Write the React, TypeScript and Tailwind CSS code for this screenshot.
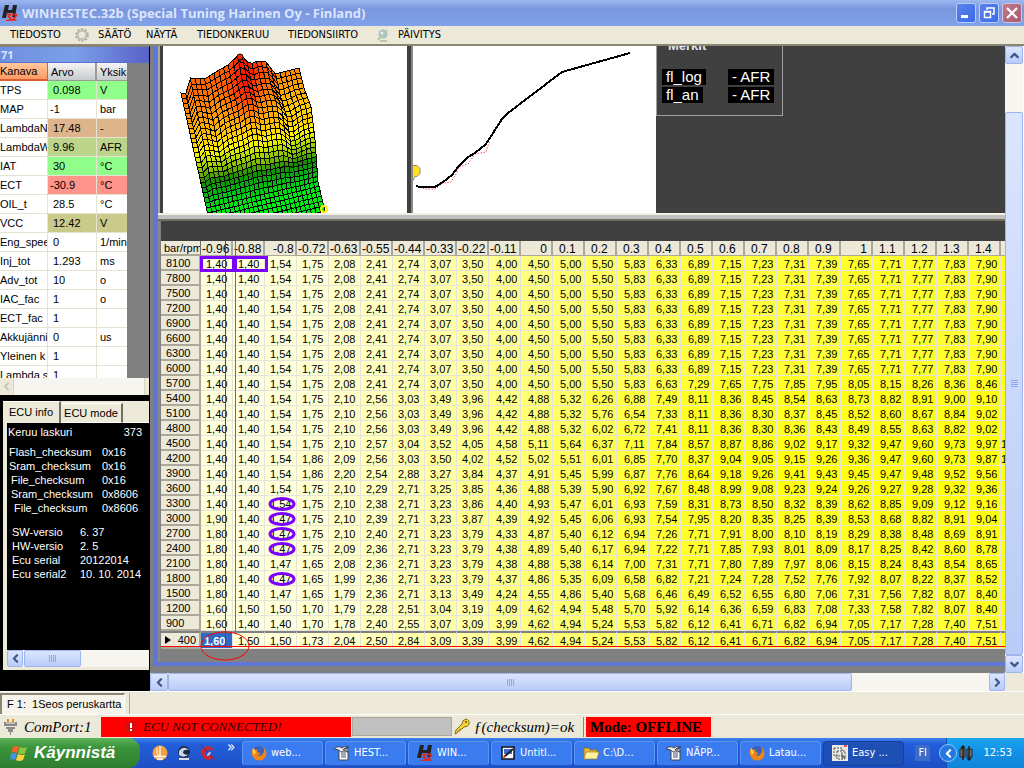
import React from "react";
import { ChevronLeft, ChevronRight, ChevronUp, ChevronDown, Settings } from "lucide-react";

const SANS = "font-['Liberation_Sans',Arial,sans-serif]";
const UI = "font-['DejaVu_Sans_Condensed','DejaVu_Sans',sans-serif]";
const SERIF = "font-['Liberation_Serif','Times_New_Roman',serif]";

const COLS = "-0.96 -0.88 -0.8 -0.72 -0.63 -0.55 -0.44 -0.33 -0.22 -0.11 0 0.1 0.2 0.3 0.4 0.5 0.6 0.7 0.8 0.9 1 1.1 1.2 1.3 1.4".split(" ");
const BASE = "1,40 1,40 1,54 1,75 2,08 2,41 2,74 3,07 3,50 4,00 4,50 5,00 5,50 5,83 6,33 6,89 7,15 7,23 7,31 7,39 7,65 7,71 7,77 7,83 7,90";
const ROWS: [string, string][] = [
  ["8100", BASE], ["7800", BASE], ["7500", BASE], ["7200", BASE],
  ["6900", BASE], ["6600", BASE], ["6300", BASE], ["6000", BASE],
  ["5700", "1,40 1,40 1,54 1,75 2,08 2,41 2,74 3,07 3,50 4,00 4,50 5,00 5,50 5,83 6,63 7,29 7,65 7,75 7,85 7,95 8,05 8,15 8,26 8,36 8,46"],
  ["5400", "1,40 1,40 1,54 1,75 2,10 2,56 3,03 3,49 3,96 4,42 4,88 5,32 6,26 6,88 7,49 8,11 8,36 8,45 8,54 8,63 8,73 8,82 8,91 9,00 9,10"],
  ["5100", "1,40 1,40 1,54 1,75 2,10 2,56 3,03 3,49 3,96 4,42 4,88 5,32 5,76 6,54 7,33 8,11 8,36 8,30 8,37 8,45 8,52 8,60 8,67 8,84 9,02"],
  ["4800", "1,40 1,40 1,54 1,75 2,10 2,56 3,03 3,49 3,96 4,42 4,88 5,32 6,02 6,72 7,41 8,11 8,36 8,30 8,36 8,43 8,49 8,55 8,63 8,82 9,02"],
  ["4500", "1,40 1,40 1,54 1,75 2,10 2,57 3,04 3,52 4,05 4,58 5,11 5,64 6,37 7,11 7,84 8,57 8,87 8,86 9,02 9,17 9,32 9,47 9,60 9,73 9,97 1"],
  ["4200", "1,40 1,40 1,54 1,86 2,09 2,56 3,03 3,50 4,02 4,52 5,02 5,51 6,01 6,85 7,70 8,37 9,04 9,05 9,15 9,26 9,36 9,47 9,60 9,73 9,87 1"],
  ["3900", "1,40 1,40 1,54 1,86 2,20 2,54 2,88 3,27 3,84 4,37 4,91 5,45 5,99 6,87 7,76 8,64 9,18 9,26 9,41 9,43 9,45 9,47 9,48 9,52 9,56"],
  ["3600", "1,40 1,40 1,54 1,75 2,10 2,29 2,71 3,25 3,85 4,36 4,88 5,39 5,90 6,92 7,67 8,48 8,99 9,08 9,23 9,24 9,26 9,27 9,28 9,32 9,36"],
  ["3300", "1,40 1,40 1,54 1,75 2,10 2,38 2,71 3,23 3,86 4,40 4,93 5,47 6,01 6,93 7,59 8,31 8,73 8,50 8,32 8,39 8,62 8,85 9,09 9,12 9,16"],
  ["3000", "1,90 1,40 1,47 1,75 2,10 2,39 2,71 3,23 3,87 4,39 4,92 5,45 6,06 6,93 7,54 7,95 8,20 8,35 8,25 8,39 8,53 8,68 8,82 8,91 9,04"],
  ["2700", "1,80 1,40 1,47 1,75 2,10 2,40 2,71 3,23 3,79 4,33 4,87 5,40 6,12 6,94 7,26 7,71 7,91 8,00 8,10 8,19 8,29 8,38 8,48 8,69 8,91"],
  ["2400", "1,80 1,40 1,47 1,75 2,09 2,36 2,71 3,23 3,79 4,38 4,89 5,40 6,17 6,94 7,22 7,71 7,85 7,93 8,01 8,09 8,17 8,25 8,42 8,60 8,78"],
  ["2100", "1,80 1,40 1,47 1,65 2,08 2,36 2,71 3,23 3,79 4,38 4,88 5,38 6,14 7,00 7,31 7,71 7,80 7,89 7,97 8,06 8,15 8,24 8,43 8,54 8,65"],
  ["1800", "1,80 1,40 1,47 1,65 1,99 2,36 2,71 3,23 3,79 4,37 4,86 5,35 6,09 6,58 6,82 7,21 7,24 7,28 7,52 7,76 7,92 8,07 8,22 8,37 8,52"],
  ["1500", "1,80 1,40 1,47 1,65 1,79 2,36 2,71 3,13 3,49 4,24 4,55 4,86 5,40 5,68 6,46 6,49 6,52 6,55 6,80 7,06 7,31 7,56 7,82 8,07 8,40"],
  ["1200", "1,60 1,50 1,50 1,70 1,79 2,28 2,51 3,04 3,19 4,09 4,62 4,94 5,48 5,70 5,92 6,14 6,36 6,59 6,83 7,08 7,33 7,58 7,82 8,07 8,40"],
  ["900", "1,60 1,40 1,40 1,70 1,78 2,40 2,55 3,07 3,09 3,99 4,62 4,94 5,24 5,53 5,82 6,12 6,41 6,71 6,82 6,94 7,05 7,17 7,28 7,40 7,51"],
  ["400", "1,60 1,50 1,50 1,73 2,04 2,50 2,84 3,09 3,39 3,99 4,62 4,94 5,24 5,53 5,82 6,12 6,41 6,71 6,82 6,94 7,05 7,17 7,28 7,40 7,51"],
];

const CHANNELS: [string, string, string, string][] = [
  ["TPS", "0.098", "V", "#90ff8a"], ["MAP", "-1", "bar", "#ffffff"],
  ["LambdaN", "17.48", "-", "#deb58a"], ["LambdaW", "9.96", "AFR", "#bdd58a"],
  ["IAT", "30", "°C", "#90ff8a"], ["ECT", "-30.9", "°C", "#ff948a"],
  ["OIL_t", "28.5", "°C", "#ffffff"], ["VCC", "12.42", "V", "#caca8a"],
  ["Eng_spee", "0", "1/min", "#ffffff"], ["Inj_tot", "1.293", "ms", "#ffffff"],
  ["Adv_tot", "10", "o", "#ffffff"], ["IAC_fac", "1", "o", "#ffffff"],
  ["ECT_fac", "1", "", "#ffffff"], ["Akkujänni", "0", "us", "#ffffff"],
  ["Yleinen k", "1", "", "#ffffff"], ["Lambda s", "1", "", "#ffffff"],
];

function cellColor(v: string, col: number) {
  const n = col > 24 ? 9.8 : parseFloat(v.replace(",", "."));
  const b = Math.max(10, Math.min(225, Math.round((262 - n * 30) / 6) * 6 + (n > 6 ? (n - 6) * 8 : 0)));
  return `rgb(255,255,${Math.round(b)})`;
}

type Pt = [number, number];
const interp = (pts: Pt[], t: number) => {
  for (let i = 1; i < pts.length; i++) {
    if (t <= pts[i][0]) {
      const [a, b] = [pts[i - 1], pts[i]];
      return a[1] + ((b[1] - a[1]) * (t - a[0])) / (b[0] - a[0]);
    }
  }
  return pts[pts.length - 1][1];
};

/* Vertical offset of the ridge line from the straight back edge. */
const RIDGE: Pt[] = [[0, 0], [0.05, 2], [0.08, -12], [0.14, -11], [0.2, -9], [0.3, -14], [0.4, -18], [0.5, -27], [0.58, -14], [0.65, -16], [0.72, -13], [0.8, 1], [1, 0]];
const RIGHT: Pt[] = [[0, 299], [0.14, 304], [0.27, 311], [0.5, 315], [0.8, 318], [1, 325]];
const STOPS: [number, number[]][] = [
  [85, [255, 100, 0]], [112, [255, 150, 0]], [134, [255, 190, 0]], [150, [255, 245, 0]], [158, [205, 230, 0]],
  [170, [130, 190, 0]], [181, [20, 140, 0]], [196, [0, 190, 20]], [212, [0, 235, 20]],
];

function meshPoint(u: number, v: number): Pt {
  const lx = 181 + 32 * v;
  const x = lx + (interp(RIGHT, v) - lx) * u;
  const ly = 93 + 145 * v;
  const ry = 68 + 143 * v;
  const fade = Math.max(0, 1 - v * 1.25);
  const valley = v > 0.05 && v < 0.65 ? Math.sin(((v - 0.05) / 0.6) * Math.PI) * (Math.exp(-(((u - 0.83) / 0.06) ** 2)) * 5 + Math.exp(-(((u - 0.2) / 0.05) ** 2)) * 4) : 0;
  return [x, ly + (ry - ly) * u + interp(RIDGE, u) * fade + valley];
}

function meshColor(x: number, y: number) {
  const q = y + 0.2 * (x - 200);
  let c = STOPS[STOPS.length - 1][1];
  if (q < STOPS[0][0]) c = STOPS[0][1];
  else
    for (let i = 1; i < STOPS.length; i++)
      if (q <= STOPS[i][0]) {
        const t = (q - STOPS[i - 1][0]) / (STOPS[i][0] - STOPS[i - 1][0]);
        c = STOPS[i][1].map((k, j) => STOPS[i - 1][1][j] + (k - STOPS[i - 1][1][j]) * t);
        break;
      }
  const heat = Math.exp(-(((x - 242) / 15) ** 2)) * Math.max(0, Math.min(1, (125 - y) / 40));
  const edge = x > 275 && q < 134 ? 30 : 0;
  return `rgb(${Math.round(c[0])},${Math.round(Math.min(255, c[1] + edge) * (1 - heat * 0.8))},${Math.round(c[2])})`;
}

function Surface() {
  const nu = 25, nv = 29;
  const quads: React.ReactNode[] = [];
  for (let j = 0; j < nv; j++)
    for (let i = 0; i < nu; i++) {
      const p = [meshPoint(i / nu, j / nv), meshPoint((i + 1) / nu, j / nv), meshPoint((i + 1) / nu, (j + 1) / nv), meshPoint(i / nu, (j + 1) / nv)];
      quads.push(<polygon key={`${i}-${j}`} points={p.map(([x, y]) => `${x.toFixed(1)},${y.toFixed(1)}`).join(" ")} fill={meshColor(p[0][0], p[0][1])} />);
    }
  return (
    <svg width="242" height="167" viewBox="163 46 242 167" className="block shrink-0" role="img" aria-label="3D">
      <g stroke="#000" strokeWidth="1" shapeRendering="crispEdges">{quads}</g>
      <circle cx="240" cy="57" r="3" fill="#ff2a00" stroke="#000" />
      <circle cx="324" cy="209" r="3" fill="none" stroke="#ffee00" strokeWidth="2" />
    </svg>
  );
}

function Curve() {
  return (
    <svg width="243" height="167" viewBox="413 46 243 167" className="block shrink-0" role="img" aria-label="2D">
      <path d="M412 165.500h5l3 3v5l-3 3h-2l-2 4h-2z" fill="#ffe11a" stroke="#888" strokeWidth="1" />
      <path d="M420 187l5 2h10l8-6 8-1 5-8 3-7 9-3 7-10 11-2 4-12" fill="none" stroke="#e00" strokeWidth="1" strokeDasharray="1 2" />
      <path d="M416 186l4 1h15l8-5 9-7 6-8 10-10 7-4 11-9 16-25 6-6 54-41 25-7 43-12" fill="none" stroke="#000" strokeWidth="2" shapeRendering="crispEdges" />
    </svg>
  );
}

const SB = "flex shrink-0 items-center justify-center rounded-xs border border-[#9db5ee] bg-linear-to-b from-[#dbe5fe] to-[#b9cbf7] text-[#3f5688]";

function Grip({ vertical = false }: { vertical?: boolean }) {
  return (
    <span className={vertical ? "flex flex-col gap-px" : "flex gap-px"}>
      {[0, 1, 2, 3].map((i) => (
        <i key={i} className={vertical ? "h-px w-[7px] bg-[#8ba7ee]" : "h-[7px] w-px bg-[#8ba7ee]"} />
      ))}
    </span>
  );
}

function LogoH() {
  return (
    <svg width="16" height="16" viewBox="0 0 16 16" className="shrink-0">
      <path d="M3 0h4L6 5h4l1-5h4l-2 12h-3l1-4H5l-1 5H0z" fill="#222" />
      <path d="M4.500 9.500h4l-2 2.500 2 1-1 2.500H4M10 10.500q4-3 4.500 0-1 2-5 4.500h5" fill="none" stroke="#f02010" strokeWidth="1.600" />
    </svg>
  );
}

function Firefox() {
  return (
    <svg width="16" height="16" viewBox="0 0 16 16" className="shrink-0">
      <circle cx="8" cy="8" r="7" fill="#3b62b8" />
      <path d="M2 3Q0 6 1 10q2 6 8 5.500q6-1 6.500-7Q15 4 12 1.500q2 4 0 7Q10 12 6 10q3 0 3.500-2L6 7l1-2-3-.5z" fill="#f08418" />
      <path d="M2 3q-1 4 1 7l2-3z" fill="#ffd34d" />
    </svg>
  );
}

function Doc() {
  return (
    <svg width="16" height="16" viewBox="0 0 16 16" className="shrink-0">
      <path d="M5 4h9v11H5z" fill="#fff" stroke="#444" />
      <path d="M7 8h5M7 10h5M7 12h5" stroke="#456" />
      <path d="M0 4q4-4 8-1 3-3 7-1-4 0-6 3 3 0 5 2-5-2-7 0-2-3-7-3z" fill="#eee" stroke="#222" strokeWidth=".7" />
    </svg>
  );
}

function Paint() {
  return (
    <svg width="16" height="16" viewBox="0 0 16 16" className="shrink-0">
      <path d="M2 2h12v12H2z" fill="#fff" stroke="#112" strokeWidth="1.500" />
      <path d="M4 4h8v5H4z" fill="#3c6ed8" />
      <path d="M4 12l9-8" stroke="#222" strokeWidth="2" />
      <path d="M3 13l3-1-2-2z" fill="#e33" />
    </svg>
  );
}

function Folder() {
  return (
    <svg width="16" height="16" viewBox="0 0 16 16" className="shrink-0">
      <path d="M1 3h5l1 2h7v8H1z" fill="#e9b93c" stroke="#8a6a15" strokeWidth=".7" />
      <path d="M3 7h13l-2 7H1z" fill="#fff0a0" stroke="#a07c20" strokeWidth=".7" />
    </svg>
  );
}

function Easy() {
  return (
    <svg width="16" height="16" viewBox="0 0 16 16" className="shrink-0">
      <path d="M0 0h16v16H0z" fill="#eceae4" />
      <path d="M2 3h8v8H2zM5 6h8v8H5z" fill="none" stroke="#555" strokeDasharray="2 1" />
      <path d="M9 8l5 5-3 0-1 2z" fill="#667" />
      <path d="M12 0h3v2h-3z" fill="#e55" />
    </svg>
  );
}

const TASKS: [React.ReactNode, string][] = [
  [<Firefox />, "web..."], [<Doc />, "HEST..."], [<LogoH />, "WIN..."], [<Paint />, "Untitl..."],
  [<Folder />, "C:\\D..."], [<Doc />, "NÄPP..."], [<Firefox />, "Latau..."], [<Easy />, "Easy ..."],
];

function TitleBar() {
  return (
    <header className="flex h-[26px] shrink-0 items-center bg-linear-to-b from-[#9db8ef] via-[#7a96df] via-35% to-[#80a2ea] pr-[2px] pl-[2px]">
      <LogoH />
      <h1 className="ml-1 flex-1 truncate font-['Open_Sans',sans-serif] text-[13px] leading-5 font-bold text-[#dbe5fb]">WINHESTEC.32b (Special Tuning Harinen Oy - Finland)</h1>
      <div className="flex gap-[3px]">
        <button aria-label="Pienennä" className="flex h-5 w-5 items-center justify-center rounded-[3px] border border-[#b9ccf5] bg-linear-to-br from-[#5a82e8] to-[#3a6ae8]">
          <svg width="14" height="14"><path d="M2 9h7v3H2z" fill="#fff" /></svg>
        </button>
        <button aria-label="Palauta" className="flex h-5 w-5 items-center justify-center rounded-[3px] border border-[#b9ccf5] bg-linear-to-br from-[#5a82e8] to-[#3a6ae8]">
          <svg width="14" height="14"><path d="M5 4V2h7v6h-2M2.500 5.500h6v6h-6zM2 6h7" fill="none" stroke="#fff" strokeWidth="1.500" /></svg>
        </button>
        <button aria-label="Sulje" className="flex h-5 w-5 items-center justify-center rounded-[3px] border border-[#cfc4df] bg-linear-to-br from-[#c07a8c] to-[#a85a70]">
          <svg width="14" height="14"><path d="M2 2l10 10M12 2L2 12" stroke="#fff" strokeWidth="2.200" /></svg>
        </button>
      </div>
    </header>
  );
}

function MenuBar() {
  return (
    <nav className={`${UI} flex h-5 shrink-0 items-center border-b-2 border-[#8a8674] bg-[#ece9d8] pl-[10px] text-[11px] leading-4 whitespace-nowrap text-black`}>
      <button className="w-[65px] text-left">TIEDOSTO</button>
      <button className="flex w-[71px] items-center gap-[9px]">
        <svg width="14" height="14" viewBox="0 0 14 14"><circle cx="7" cy="7" r="4.500" fill="none" stroke="#c4c2b8" strokeWidth="2.500" /><circle cx="7" cy="7" r="6" fill="none" stroke="#a8a69c" strokeWidth="1.500" strokeDasharray="2 1.800" /></svg>
        SÄÄTÖ
      </button>
      <button className="w-[51px] text-left">NÄYTÄ</button>
      <button className="w-[91px] text-left">TIEDONKERUU</button>
      <button className="w-[88px] text-left">TIEDONSIIRTO</button>
      <button className="flex items-center gap-[8px]">
        <svg width="14" height="14" viewBox="0 0 14 14"><circle cx="7" cy="6" r="4.500" fill="#a9c3c4" /><path d="M2 12l9-10M4 13h7" stroke="#b8c8a8" strokeWidth="2" /><circle cx="6" cy="5" r="1.500" fill="#e4f0f0" /></svg>
        PÄIVITYS
      </button>
    </nav>
  );
}

function ChannelPanel() {
  return (
    <section className="flex flex-col bg-[#808080] pt-px">
      <h2 className="h-[16px] truncate border-b border-[#5b6fd0] bg-linear-to-r from-[#6f8fe0] via-[#7ba0e8] to-[#5a60c8] pl-px font-['Noto_Sans',sans-serif] text-[11px] leading-[15px] font-bold text-[#dbe5fb]">71</h2>
      <div className="h-[315px] overflow-hidden">
        <table className="w-[127px] table-fixed border-separate border-spacing-0 bg-white text-[11px] leading-[14px] whitespace-nowrap text-black">
          <thead>
            <tr className="h-[18px] text-left">
              <th className="w-[48px] overflow-hidden border-r border-b-2 border-[#d86030] bg-linear-to-b from-[#ffc8a0] to-[#ff9a60] p-0 font-normal">Kanava</th>
              <th className="w-[49px] border-r-2 border-b border-[#9a9a9a] bg-linear-to-b from-[#f4f4f4] to-[#c8cacd] p-0 pl-[3px] font-normal">Arvo</th>
              <th className="w-[30px] overflow-hidden border-b border-[#9a9a9a] bg-linear-to-b from-[#f4f4f4] to-[#c8cacd] p-0 pl-[3px] font-normal">Yksik</th>
            </tr>
          </thead>
          <tbody>
            {CHANNELS.map(([n, v, u, c]) => (
              <tr key={n} className="h-[19px]">
                <td className="overflow-hidden border-r border-b border-[#e6e3d4] p-0">{n}</td>
                <td className={`border-r border-b border-[#e6e3d4] p-0 ${v[0] === "-" ? "pl-[2px]" : "pl-[5px]"}`} style={{ background: c }}>{v}</td>
                <td className="overflow-hidden border-b border-[#e6e3d4] p-0 pl-[3px]" style={{ background: c }}>{u}</td>
              </tr>
            ))}
          </tbody>
        </table>
      </div>
      <div className="flex h-[17px] bg-[#f6f5f0]">
        <button aria-label="Vieritä vasemmalle" className="flex w-[14px] items-center justify-center border-r border-[#d8d5c5] bg-[#ece9d8] text-[#c0bdae]"><ChevronLeft size={13} strokeWidth={3} /></button>
        <span className="ml-auto w-[5px] border-l border-[#d8d5c5] bg-[#ece9d8]" />
      </div>
    </section>
  );
}

const SUMS = [
  ["Flash_checksum", "0x16", "pl-px"], ["Sram_checksum", "0x16", "pl-px"], ["File_checksum", "0x16", "pl-[3px]"],
  ["Sram_checksum", "0x8606", "pl-[3px]"], ["File_checksum", "0x8606", "pl-[6px]"],
];
const VERSIONS = [["SW-versio", "6. 37"], ["HW-versio", "2. 5"], ["Ecu serial", "20122014"], ["Ecu serial2", "10. 10. 2014"]];

function EcuPanel() {
  return (
    <section className="mt-[6px] ml-[3px] flex flex-1 flex-col bg-[#ece9d8] text-[11px] leading-[14px]">
      <div role="tablist" className="flex h-[22px] shrink-0 items-end whitespace-nowrap text-black">
        <button role="tab" aria-selected="true" className="h-[22px] w-[58px] border-t border-r-2 border-white border-r-[#716f64] pb-[2px]">ECU info</button>
        <button role="tab" aria-selected="false" className="h-[20px] w-[62px] border-t border-r-2 border-b border-white border-r-[#716f64]">ECU mode</button>
        <span className="flex-1 border-b border-white" />
      </div>
      <div className="ml-1 flex-1 bg-black pt-[2px] pl-px whitespace-nowrap text-white">
        <p className="flex justify-between pr-[7px]"><span>Keruu laskuri</span><span>373</span></p>
        <dl className="mt-[6px]">
          {SUMS.map(([k, v, pad], i) => (
            <div key={i} className="flex"><dt className={`w-[94px] ${pad}`}>{k}</dt><dd>{v}</dd></div>
          ))}
        </dl>
        <dl className="mt-[10px]">
          {VERSIONS.map(([k, v]) => (
            <div key={k} className="flex"><dt className="w-[72px] pl-1">{k}</dt><dd>{v}</dd></div>
          ))}
        </dl>
      </div>
      <div className="mb-[3px] ml-1 flex h-[17px] bg-[#f6f5f0]">
        <button aria-label="Vieritä vasemmalle" className={`${SB} w-4`}><ChevronLeft size={13} strokeWidth={4} /></button>
        <div className={`${SB} ml-px w-[57px]`}><Grip /></div>
      </div>
    </section>
  );
}

function Markers() {
  const box = "bg-black px-1 text-[15px] leading-4 text-white";
  return (
    <div className="h-[70px] w-[127px] shrink-0 overflow-hidden border-r border-b border-l border-[#a0a0a0] bg-[#404040]">
      <h3 className="-mt-2 ml-[11px] h-[14px] text-[13px] leading-[16px] font-bold text-[#e8e8e8]">Merkit</h3>
      <div className="mt-[17px] ml-[5px] grid w-[113px] grid-cols-[66px_47px] items-start justify-items-start gap-y-[2px] whitespace-nowrap">
        <span className={box}>ﬂ_log</span><span className={box}>- AFR</span>
        <span className={box}>ﬂ_an</span><span className={box}>- AFR</span>
      </div>
    </div>
  );
}

function MapTable() {
  return (
    <div className="relative w-[872px]">
      <table className="w-[872px] table-fixed border-separate border-spacing-0 text-[11px] leading-[12px] whitespace-nowrap text-black">
        <thead>
          <tr className="h-[15px] bg-[#ece9d8] text-left">
            <th className="w-10 overflow-hidden border-r border-b-2 border-[#aca899] border-r-[#716f64] p-0 pl-[3px] font-normal">bar/rpm</th>
            {COLS.map((c, i) => (
              <th key={c} className={`h-[15px] w-8 border-r-2 border-b border-[#aca899] p-0 pt-[2px] text-[12px] font-normal ${c === "0" || c === "1" ? "pr-1 text-right" : c === "-0.8" ? "pl-2" : i > 10 ? "pl-[6px]" : "pl-px"}`}>{c}</th>
            ))}
            <th className="w-8 border-b border-[#aca899] p-0" />
          </tr>
        </thead>
        <tbody>
          {ROWS.map(([rpm, data]) => {
            const last = rpm === "400";
            const vals = data.split(" ");
            if (vals.length < 26) vals.push("");
            return (
              <tr key={rpm} className={last ? "h-[18px]" : "h-[15px]"}>
                <th className={`border-r-2 border-b-2 border-[#aca899] bg-[#ece9d8] p-0 text-left font-normal ${last ? "border-t-2 border-t-[#808080] pr-[3px]" : "pt-px pl-[5px]"}`}>
                  {last ? <span className="flex items-center justify-between pl-1"><svg width="6" height="8"><path d="M0 0l6 4-6 4z" /></svg>400</span> : rpm}
                </th>
                {vals.map((v, i) => {
                  const sel = last && i === 0;
                  return (
                    <td key={i} className={`overflow-hidden border-r border-b border-[#e4e4dc] p-0 ${last ? "border-t-2 border-t-[#808080]" : "pt-px"} ${sel ? "font-bold text-white" : ""} ${i === 25 ? "pl-0" : i > 8 ? "pl-[7px]" : sel ? "pl-[3px]" : "pl-[5px]"}`} style={{ background: sel ? "#316ac5" : cellColor(v, i) }}>{v}</td>
                  );
                })}
              </tr>
            );
          })}
        </tbody>
      </table>
      <svg className="pointer-events-none absolute top-0 left-0 overflow-visible" width="872" height="408" fill="none">
        <path d="M74.500 0v391" stroke="#716f64" />
        <path d="M64.500 0v405" stroke="#ff0000" />
        <path d="M0 405.500h872" stroke="#ff0000" />
        <path d="M40.500 16.500h32v13h-32zM74.500 16.500h31v13h-31z" stroke="#7a00ff" strokeWidth="3" />
        {[263, 278, 293, 308, 338].map((y) => (
          <ellipse key={y} cx="121" cy={y} rx="12" ry="5.500" stroke="#7a00ff" strokeWidth="3" />
        ))}
        <ellipse cx="64" cy="405" rx="24" ry="14" stroke="#ff0000" />
      </svg>
    </div>
  );
}

function Workspace() {
  return (
    <main className="flex min-w-0 flex-1 flex-col">
      <div className="flex min-h-0 flex-1">
        <div className="flex min-w-0 flex-1 flex-col bg-[#808080] pb-[7px] pl-[3px]">
          <div className="flex min-h-0 flex-1 flex-col border-b-4 border-l-[5px] border-[#6076d8]">
            <div className="flex h-[167px] shrink-0 overflow-hidden border-l-2 border-[#aca899] bg-[#404040] pl-[3px]">
              <div className="flex shrink-0 bg-white pr-[2px]"><Surface /></div>
              <div className="ml-[4px] shrink-0 border-l-2 border-[#8c8a80] bg-white"><Curve /></div>
              <Markers />
            </div>
            <div className="h-2 shrink-0 border-t-2 border-b-2 border-t-[#f2f0e6] border-b-[#716f64] bg-[#c0c0c0]" />
            <div className="flex min-h-0 flex-1 flex-col overflow-hidden border-l-2 border-[#8c8a80] pl-px">
              <div className="h-5 shrink-0 bg-[#404040]" />
              <MapTable />
            </div>
          </div>
        </div>
        <div className="flex w-[19px] shrink-0 flex-col border-r border-white bg-[#f6f5f0]">
          <button aria-label="Vieritä ylös" className={`${SB} h-[18px]`}><ChevronUp size={13} strokeWidth={4} /></button>
          <div className="h-12 shrink-0" />
          <div className={`${SB} min-h-0 flex-1 shrink`}><Grip vertical /></div>
          <button aria-label="Vieritä alas" className={`${SB} h-[18px]`}><ChevronDown size={13} strokeWidth={4} /></button>
        </div>
      </div>
      <div className="flex h-[18px] shrink-0 bg-[#ece9d8]">
        <div className="flex flex-1 bg-[#f6f5f0]">
          <button aria-label="Vieritä vasemmalle" className={`${SB} w-[18px]`}><ChevronLeft size={13} strokeWidth={4} /></button>
          <div className={`${SB} w-4/5`}><Grip /></div>
          <button aria-label="Vieritä oikealle" className={`${SB} ml-auto w-4`}><ChevronRight size={13} strokeWidth={4} /></button>
        </div>
        <span className="w-[19px]" />
      </div>
    </main>
  );
}

function StatusBars() {
  return (
    <div className="shrink-0 bg-[#ece9d8] text-black">
      <div className="flex h-[23px] border-t border-white pt-px text-[11px] leading-[19px]">
        <div className="w-[125px] border-t-2 border-r border-l-2 border-[#8a8674] border-r-white bg-[#f5f3ea] pl-[5px] whitespace-pre">F 1:  1Seos peruskartta</div>
        <span className="ml-1 border-l border-[#aca899]" />
      </div>
      <div className={`${SERIF} flex h-6 items-center border-t border-white text-[15px] leading-5 whitespace-nowrap`}>
        <div className="flex w-[101px] items-center gap-[6px] pl-[3px] italic">
          <svg width="15" height="17" viewBox="0 0 15 17"><path d="M1 4h13v4H1zM3 9h9v2H3zM5 11h5v3H5zM7 14h1v3H7z" fill="#8a8a86" /><path d="M4 1h2v3H4zM9 1h2v3H9z" fill="#e88a20" /><path d="M3 5h9" stroke="#eee" /></svg>
          <span>ComPort:1</span>
        </div>
        <div className="flex h-5 w-[250px] items-center bg-[#ff0000] pl-[25px] text-[13px] text-[#300000] italic">
          <svg width="9" height="10" className="mr-2"><path d="M0 0h9v10H0z" fill="#d01010" /><path d="M4 1h2v5H4zM4 7h2v2H4z" fill="#fff" /></svg>
          ECU NOT CONNECTED!
        </div>
        <div className="ml-px h-[19px] w-[100px] border border-[#aca899] bg-[#c0c0c0]" />
        <div className="ml-[2px] flex w-[129px] items-center gap-[4px] italic">
          <svg width="16" height="17" viewBox="0 0 16 17"><path d="M1 16l1-4 6-6q0-4 4-5 4 1 3 5-1 3-5 3l-2 2-2 0 0 2-2 0-1 2z" fill="#f5d535" stroke="#8a6a10" /><circle cx="12" cy="4" r="1" fill="#6a4a10" /></svg>
          <span>ƒ(checksum)=ok</span>
        </div>
        <div className="h-5 border-l border-[#8a8674] pl-[2px]"><div className="h-5 w-[125px] bg-[#ff0000] pl-1 text-[15px] font-bold">Mode: OFFLINE</div></div>
      </div>
    </div>
  );
}

function Taskbar() {
  return (
    <footer className={`${UI} flex h-[30px] shrink-0 items-stretch bg-linear-to-b from-[#3f80ec] via-[#245edb] via-20% to-[#1d4fc4] text-[11px] text-white`}>
      <button className="flex w-[140px] shrink-0 items-center gap-[6px] rounded-r-xl bg-linear-to-b from-[#5fb45c] via-[#3a953a] via-30% to-[#2f7d2f] pl-[10px] font-['Liberation_Sans',Arial,sans-serif] text-[17px] leading-5 font-bold italic">
        <svg width="18" height="17" viewBox="0 0 18 17"><path d="M3 2q3-2 6 0L7 8Q4 6 1 8z" fill="#f26522" /><path d="M10 2q3 2 7 0l-2 6q-4 2-7 0z" fill="#8cc63f" /><path d="M1 9q3-2 6 0l-2 6q-3-2-5 0z" fill="#4a90f0" /><path d="M8 9q4 2 7 0l-2 6q-4 2-7 0z" fill="#ffd23a" /></svg>
        Käynnistä
      </button>
      <div className="flex w-[102px] shrink-0 items-center gap-2 pl-3">
        <svg width="16" height="16"><circle cx="8" cy="8" r="7.500" fill="#f7a040" /><path d="M8 1v11M2 11.500h12M5 14h6" stroke="#fff" fill="none" strokeWidth="1.300" /><path d="M5 3v6q1 2 3 2" stroke="#fff" fill="none" /></svg>
        <svg width="16" height="16"><circle cx="8" cy="7" r="6" fill="#1c2740" /><path d="M3 6q4-6 10-1-6-1-6 3 3 3 6 1-5 5-10 1z" fill="#c8d4ea" /><path d="M3 14h10" stroke="#dde" strokeWidth="2" /></svg>
        <svg width="16" height="16"><path d="M12 5Q9 1 5 4t0 8q4 3 7-1" stroke="#e02020" strokeWidth="3" fill="none" /><path d="M1 0l14 15" stroke="#8a2030" /><path d="M7 11q0-4 4-4-1 4-4 4" fill="#ccd" /></svg>
        <span className="-mt-3 ml-[3px] text-[15px]">»</span>
      </div>
      <div className="flex min-w-0 flex-1 items-center gap-[2px]">
        {TASKS.map(([icon, label], i) => (
          <button key={label} className={`flex h-[25px] w-[81px] items-center gap-1 rounded-sm border pl-[8px] whitespace-nowrap ${i === 7 ? "border-[#163f9e] bg-[#1e4fb4]" : "border-[#5b97f8] border-b-[#2458c8] bg-[#3a7cf0]"}`}>
            {icon}<span>{label}</span>
          </button>
        ))}
      </div>
      <div className="mr-4 flex items-center"><span className="bg-[#3a6cc8] px-[3px] leading-4">FI</span></div>
      <div className="flex w-[78px] items-center justify-between border-l border-[#0c4fb0] bg-linear-to-b from-[#1ca4f0] via-[#1290e8] to-[#1284d8] pr-3">
        <span className="-ml-2 flex size-[18px] items-center justify-center rounded-full border border-[#8cc8ff] bg-[#2478e0]"><ChevronLeft size={13} strokeWidth={4} /></span>
        <svg width="16" height="16" viewBox="0 0 16 16" className="-ml-2"><path d="M2 4h5v8H2zM9 4h5v8H9z" fill="#777" stroke="#222" /><path d="M5 1v14M11 1v14M3 3l2-2 2 2M9 13l2 2 2-2" stroke="#222" fill="none" strokeWidth="1.500" /></svg>
        <time>12:53</time>
      </div>
    </footer>
  );
}

export default function App() {
  return (
    <div className={`${SANS} flex h-screen flex-col overflow-hidden bg-[#ece9d8]`}>
      <TitleBar />
      <MenuBar />
      <div className="flex min-h-0 flex-1">
        <aside className="flex w-[150px] shrink-0 flex-col bg-black pr-px pb-[21px]">
          <ChannelPanel />
          <EcuPanel />
        </aside>
        <Workspace />
      </div>
      <StatusBars />
      <Taskbar />
    </div>
  );
}
